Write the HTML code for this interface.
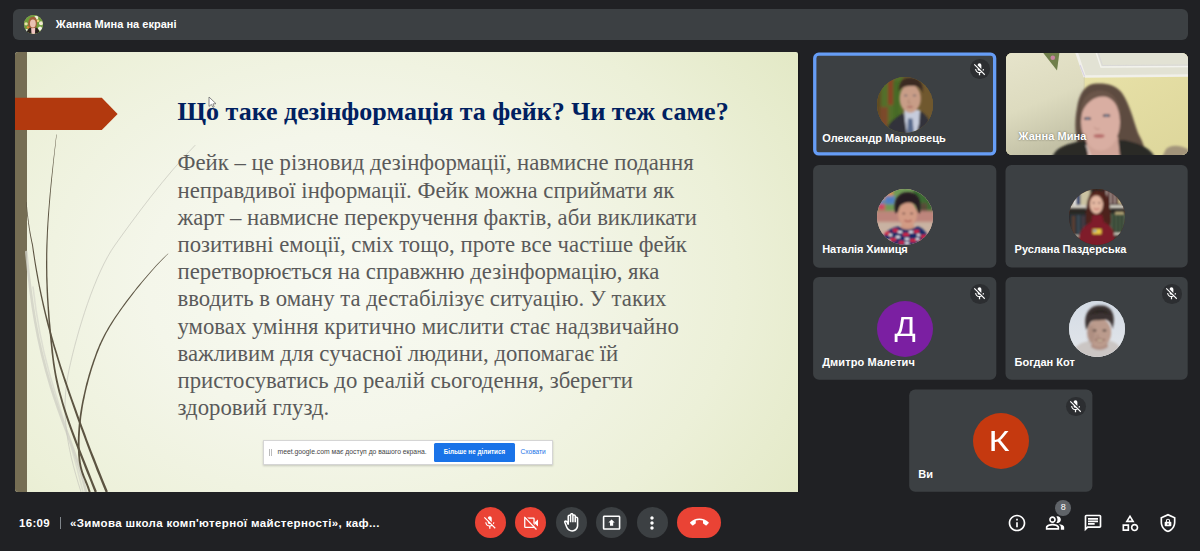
<!DOCTYPE html>
<html lang="uk">
<head>
<meta charset="utf-8">
<title>Meet</title>
<style>
*{box-sizing:border-box;margin:0;padding:0}
html,body{width:1200px;height:551px;overflow:hidden;background:#202124;font-family:"Liberation Sans",sans-serif;color:#fff}
.abs{position:absolute}
svg{display:block;position:absolute;overflow:visible}
#topbar{left:12.5px;top:9px;width:1175px;height:31px;background:#3c4043;border-radius:6px}
.ui{font-weight:bold;white-space:nowrap;line-height:14px;color:#fff}
#topbar .t{left:43.3px;top:8.2px;font-size:11px;letter-spacing:0.02px}
#slide{left:15px;top:52px;width:783px;height:439.500px;overflow:hidden;border-radius:3px 2px 0 3px;box-shadow:1.500px 0 0 #17181a;
 background:radial-gradient(ellipse 560px 420px at 42% 52%,#f8faf2 0%,#f4f6ea 35%,#ecf0d8 70%,#e2e8c4 100%)}
.tile{border-radius:6px;width:183px;height:103px;overflow:hidden}
.tile .nm{left:9.2px;top:77.4px;font-size:11px;letter-spacing:0}
.av{width:56px;height:56px;border-radius:50%;left:63.5px;top:23.5px;overflow:hidden}
.av svg{left:0;top:0}
.mic{width:19.5px;height:19.5px;border-radius:50%;background:#2c2e31;left:157px;top:7px}
.mic svg{left:2.25px;top:2.4px}
#title{left:162.5px;top:43.5px;font-family:"Liberation Serif",serif;font-weight:bold;font-size:26px;color:#002060;white-space:nowrap;line-height:32px}
#body{left:162.5px;top:97.3px;font-family:"Liberation Serif",serif;font-size:22.76px;color:#5a5a5a;white-space:nowrap;line-height:27.22px}
.btn{width:31.2px;height:31.2px;border-radius:50%;top:507.2px;background:#3c4043}
.red{background:#ea4335}
.letter{font-family:"Liberation Sans",sans-serif;color:#fff;text-align:center;width:56px;left:0}
</style>
</head>
<body>
<div id="topbar" class="abs">
  <div class="abs" id="tav" style="left:11.800px;top:5.800px;width:19.100px;height:19.100px;border-radius:50%;overflow:hidden;background:#b9a27e"><svg width="19.100" height="19.100" viewBox="0 0 56 56" style="left:0;top:0">
<rect width="56" height="56" fill="#6f9e3c"/>
<g filter="url(#b2)"><circle cx="36" cy="8" r="6" fill="#f3efd8"/><circle cx="50" cy="24" r="6" fill="#f1ead0"/><circle cx="6" cy="26" r="5" fill="#eadfa8"/><circle cx="47" cy="40" r="6" fill="#f3f1e6"/><circle cx="41" cy="17" r="4" fill="#e9d37a"/><circle cx="12" cy="36" r="4" fill="#e08a3a"/><circle cx="38" cy="52" r="5" fill="#f0d080"/><circle cx="8" cy="46" r="5" fill="#efeee8"/>
<path d="M6,58 C8,44 14,38 22,36 L34,36 C42,38 46,46 46,58Z" fill="#29221f"/><path d="M21,36 L33,36 L32,58 L22,58Z" fill="#f0c4c0"/>
<path d="M13,34 C10,14 18,5 27,5 C36,5 40,14 37,34 C34,40 16,40 13,34Z" fill="#a2613a"/><ellipse cx="26" cy="25" rx="8.500" ry="11.500" fill="#e9c2b2"/></g>
</svg></div>
  <div class="t ui abs">Жанна Мина на екрані</div>
</div>

<div id="slide" class="abs">
  <div class="abs" style="left:0;top:0;width:12px;height:440px;background:#756d53"></div>
  <svg id="deco" width="783" height="440" viewBox="0 0 783 440" style="left:0;top:0">
    <g fill="none" stroke-linecap="round">
      <path d="M11.3,200 C16,250 22,290 36,335 S62,400 71,440" stroke="#cfcfc4" stroke-width="2.6" opacity=".8"/>
      <path d="M18,235 C22,270 27,295 34,320 S55,385 68,440" stroke="#d6d6cc" stroke-width="1.6" opacity=".7"/>
      <path d="M180,93.4 C150,124 120,165 100,193 S62,280 54,318 S50,390 66,440" stroke="#c9c9be" stroke-width="0.9" opacity=".85"/>
    </g>
    <path fill="#5c5442" d="M41.3,82.5 L40.6,88.6 L39.9,94.6 L39.2,100.4 L38.5,106.2 L37.9,111.8 L37.3,117.3 L36.7,122.7 L36.1,127.9 L35.6,133.1 L35.1,138.2 L34.6,143.2 L34.2,148.1 L33.8,152.9 L33.4,157.7 L33.0,162.4 L32.7,167.0 L32.4,171.5 L32.1,176.1 L31.9,180.5 L31.7,184.9 L31.5,189.3 L31.3,193.7 L31.2,198.0 L31.1,202.3 L31.1,206.6 L31.0,210.8 L31.0,215.1 L31.1,219.4 L31.1,223.7 L31.2,228.0 L31.4,232.4 L31.5,236.7 L31.7,241.2 L31.9,245.7 L32.2,250.2 L32.5,254.8 L32.8,259.5 L33.1,264.2 L33.5,269.1 L33.9,274.0 L34.4,279.1 L34.9,284.2 L35.4,289.5 L36.0,294.9 L36.5,300.4 L37.2,306.1 L37.9,311.8 L38.8,317.6 L39.8,323.3 L40.9,329.0 L42.2,334.7 L43.6,340.4 L45.2,346.1 L46.8,351.8 L48.5,357.5 L50.4,363.2 L52.3,369.0 L54.3,374.7 L56.4,380.5 L58.5,386.3 L60.7,392.1 L63.0,398.0 L65.3,403.9 L67.7,409.9 L70.0,415.9 L72.4,421.9 L74.9,428.0 L77.3,434.2 L79.7,440.4 L81.9,439.6 L79.4,433.4 L76.9,427.2 L74.5,421.1 L72.1,415.1 L69.7,409.1 L67.3,403.1 L65.0,397.2 L62.7,391.4 L60.5,385.6 L58.3,379.8 L56.2,374.0 L54.2,368.3 L52.2,362.6 L50.4,356.9 L48.6,351.3 L47.0,345.6 L45.4,339.9 L44.0,334.3 L42.7,328.6 L41.5,323.0 L40.5,317.3 L39.6,311.6 L38.8,305.9 L38.2,300.2 L37.6,294.7 L37.0,289.3 L36.5,284.1 L35.9,278.9 L35.5,273.9 L35.0,269.0 L34.6,264.1 L34.3,259.4 L33.9,254.7 L33.6,250.1 L33.3,245.6 L33.1,241.1 L32.9,236.7 L32.7,232.3 L32.6,228.0 L32.4,223.7 L32.4,219.4 L32.3,215.1 L32.3,210.8 L32.3,206.6 L32.3,202.3 L32.4,198.0 L32.5,193.7 L32.6,189.4 L32.8,185.0 L32.9,180.6 L33.2,176.1 L33.4,171.6 L33.7,167.1 L34.0,162.4 L34.3,157.7 L34.7,153.0 L35.1,148.2 L35.5,143.3 L35.9,138.3 L36.4,133.2 L36.9,128.0 L37.4,122.7 L38.0,117.3 L38.5,111.8 L39.1,106.2 L39.7,100.5 L40.4,94.6 L41.0,88.7 L41.7,82.5Z"/>
    <path fill="#5c5442" d="M11.1,150.0 L11.2,152.6 L11.4,155.1 L11.7,157.5 L11.9,159.8 L12.1,162.0 L12.3,164.2 L12.6,166.3 L12.8,168.3 L13.1,170.3 L13.3,172.2 L13.6,174.0 L13.8,175.8 L14.1,177.6 L14.4,179.3 L14.6,180.9 L14.9,182.6 L15.2,184.1 L15.5,185.7 L15.8,187.2 L16.1,188.7 L16.4,190.2 L16.7,191.7 L17.0,193.1 L17.8,199.1 L18.7,205.1 L19.6,210.9 L20.5,216.6 L21.5,222.2 L22.5,227.7 L23.5,233.0 L24.5,238.3 L25.6,243.5 L26.7,248.6 L27.8,253.7 L28.9,258.6 L30.1,263.5 L31.3,268.4 L32.5,273.2 L33.8,277.9 L35.0,282.6 L36.3,287.3 L37.7,291.9 L39.0,296.5 L40.4,301.1 L41.8,305.7 L43.2,310.3 L44.6,314.9 L46.2,319.8 L47.9,324.9 L49.6,330.2 L51.4,335.6 L53.3,341.2 L55.3,346.8 L57.3,352.6 L59.4,358.5 L61.5,364.5 L63.7,370.5 L65.9,376.5 L68.1,382.6 L70.3,388.6 L72.6,394.7 L74.9,400.7 L77.2,406.7 L79.5,412.6 L81.7,418.4 L84.0,424.1 L86.3,429.7 L88.5,435.2 L90.7,440.5 L92.9,439.5 L90.7,434.2 L88.4,428.8 L86.2,423.2 L83.9,417.5 L81.6,411.7 L79.3,405.8 L76.9,399.9 L74.6,393.9 L72.3,387.9 L70.1,381.8 L67.8,375.8 L65.6,369.8 L63.4,363.8 L61.3,357.8 L59.2,352.0 L57.1,346.2 L55.1,340.5 L53.2,335.0 L51.4,329.6 L49.6,324.4 L47.9,319.3 L46.3,314.4 L44.8,309.7 L43.4,305.2 L42.0,300.6 L40.6,296.0 L39.2,291.4 L37.9,286.8 L36.6,282.2 L35.3,277.5 L34.0,272.8 L32.8,268.0 L31.5,263.2 L30.3,258.3 L29.2,253.4 L28.0,248.3 L26.9,243.2 L25.8,238.1 L24.7,232.8 L23.7,227.4 L22.7,222.0 L21.7,216.4 L20.7,210.7 L19.8,204.9 L18.9,199.0 L18.0,192.9 L17.7,191.5 L17.3,190.0 L17.0,188.5 L16.7,187.0 L16.4,185.5 L16.1,184.0 L15.8,182.4 L15.5,180.8 L15.2,179.1 L14.9,177.4 L14.6,175.7 L14.4,173.9 L14.1,172.1 L13.8,170.2 L13.6,168.2 L13.3,166.2 L13.1,164.1 L12.8,161.9 L12.5,159.7 L12.3,157.4 L12.1,155.0 L11.8,152.5 L11.5,150.0Z"/>
    <path fill="#5c5442" d="M153.1,201.5 L150.6,203.7 L148.2,206.1 L145.8,208.5 L143.3,211.1 L140.9,213.6 L138.5,216.3 L136.0,219.0 L133.6,221.7 L131.2,224.4 L128.8,227.2 L126.5,230.0 L124.1,232.8 L121.8,235.6 L119.6,238.4 L117.3,241.3 L115.2,244.1 L113.0,246.8 L110.9,249.6 L108.9,252.3 L107.0,255.0 L105.1,257.6 L103.3,260.2 L101.5,262.7 L99.9,265.1 L98.3,267.5 L96.8,269.8 L95.4,272.0 L94.0,274.2 L92.8,276.3 L91.6,278.4 L90.4,280.4 L89.3,282.4 L88.3,284.4 L87.3,286.4 L86.4,288.3 L85.5,290.2 L84.6,292.1 L83.8,294.0 L83.0,295.9 L82.2,297.8 L81.4,299.8 L80.7,301.7 L80.0,303.7 L79.3,305.7 L78.5,307.7 L77.8,309.8 L77.1,311.9 L76.3,314.3 L75.5,316.8 L74.7,319.5 L73.8,322.3 L73.0,325.3 L72.1,328.4 L71.2,331.6 L70.4,334.9 L69.6,338.4 L68.8,341.9 L68.0,345.5 L67.2,349.2 L66.5,353.0 L65.8,356.9 L65.2,360.8 L64.6,364.7 L64.1,368.7 L63.7,372.7 L63.4,376.8 L63.1,380.9 L62.9,384.9 L62.8,389.0 L62.8,392.9 L62.8,396.5 L63.0,399.8 L63.1,402.8 L63.4,405.7 L63.6,408.3 L64.0,410.7 L64.4,412.9 L64.8,415.0 L65.3,416.9 L65.8,418.8 L66.3,420.5 L66.9,422.2 L67.5,423.9 L68.1,425.5 L68.8,427.1 L69.5,428.8 L70.1,430.4 L70.9,432.2 L71.6,434.0 L72.3,436.0 L73.0,438.1 L73.7,440.3 L75.7,439.7 L74.9,437.4 L74.2,435.3 L73.4,433.3 L72.7,431.5 L72.0,429.7 L71.3,428.0 L70.6,426.4 L69.9,424.8 L69.3,423.2 L68.7,421.6 L68.1,419.9 L67.6,418.2 L67.1,416.4 L66.6,414.6 L66.2,412.5 L65.8,410.4 L65.5,408.0 L65.2,405.5 L65.0,402.7 L64.8,399.7 L64.7,396.4 L64.6,392.9 L64.6,389.0 L64.7,385.0 L64.9,381.0 L65.1,376.9 L65.4,372.9 L65.9,368.9 L66.3,364.9 L66.9,361.0 L67.5,357.1 L68.1,353.3 L68.8,349.6 L69.6,345.9 L70.3,342.2 L71.1,338.7 L71.9,335.3 L72.8,332.0 L73.6,328.8 L74.4,325.7 L75.3,322.7 L76.1,319.9 L76.9,317.3 L77.7,314.8 L78.5,312.4 L79.2,310.2 L79.9,308.2 L80.6,306.2 L81.3,304.2 L82.0,302.2 L82.8,300.3 L83.5,298.4 L84.3,296.5 L85.0,294.6 L85.9,292.7 L86.7,290.8 L87.6,288.9 L88.5,287.0 L89.5,285.0 L90.5,283.1 L91.5,281.1 L92.7,279.0 L93.9,277.0 L95.1,274.8 L96.4,272.7 L97.8,270.4 L99.3,268.1 L100.8,265.8 L102.5,263.3 L104.2,260.8 L106.0,258.2 L107.9,255.6 L109.8,252.9 L111.8,250.2 L113.9,247.5 L116.0,244.7 L118.1,241.9 L120.3,239.1 L122.6,236.2 L124.9,233.4 L127.2,230.6 L129.5,227.8 L131.9,225.0 L134.2,222.2 L136.6,219.5 L139.0,216.8 L141.4,214.1 L143.8,211.5 L146.2,209.0 L148.6,206.5 L151.0,204.1 L153.3,201.7Z"/>
    <polygon points="0,45.700 86.800,45.700 102.600,61.900 86.800,78.100 0,78.100" fill="#b2390e"/>
  </svg>
  <div id="title" class="abs">Що таке дезінформація та фейк? Чи теж саме?</div>
  <div id="body" class="abs">Фейк – це різновид дезінформації, навмисне подання<br>неправдивої інформації. Фейк можна сприймати як<br>жарт – навмисне перекручення фактів, аби викликати<br>позитивні емоції, сміх тощо, проте все частіше фейк<br>перетворюється на справжню дезінформацію, яка<br>вводить в оману та дестабілізує ситуацію. У таких<br>умовах уміння критично мислити стає надзвичайно<br>важливим для сучасної людини, допомагає їй<br>пристосуватись до реалій сьогодення, зберегти<br>здоровий глузд.</div>
  <svg width="10" height="14" viewBox="0 0 10 14" style="left:193.100px;top:44.100px"><path d="M1,1 L1,10.400 L3.400,8.400 L4.900,11.400 L6.200,10.800 L4.900,7.900 L8,7.700Z" fill="#fff" stroke="#6b6b6b" stroke-width="0.800" stroke-linejoin="round"/></svg>
  <div id="share" class="abs" style="left:247.500px;top:387.500px;width:290px;height:25.500px;background:#fff;border:1px solid #d5d5d5;box-shadow:0 1px 2px rgba(0,0,0,.18);font-size:6px;line-height:8px;color:#444;white-space:nowrap">
    <div class="abs" style="left:5.500px;top:8px;width:1px;height:7px;background:#bbb"></div><div class="abs" style="left:7.700px;top:8px;width:1px;height:7px;background:#bbb"></div>
    <div class="abs" style="left:14px;top:7.500px;font-size:6.800px">meet.google.com має доступ до вашого екрана.</div>
    <div class="abs" style="left:170.700px;top:2.900px;width:80.500px;height:18.200px;background:#1a73e8;border-radius:1.500px;color:#fff;font-weight:bold;font-size:6.300px;text-align:center;line-height:18px">Більше не ділитися</div>
    <div class="abs" style="left:257px;top:7.500px;color:#1a73e8;font-size:6.600px">Сховати</div>
  </div>
</div>

<svg width="1200" height="551" viewBox="0 0 1200 551" style="left:0;top:0">
<rect x="814.750" y="54.150" width="179.900" height="99.800" rx="4" fill="#3c4043" stroke="#669df6" stroke-width="3.300"/>
<g fill="#3c4043"><rect x="813.100" y="165.050" width="183.200" height="102.600" rx="6"/><rect x="1005.500" y="165.050" width="182.200" height="102.500" rx="6"/>
<rect x="813.100" y="277.100" width="183.200" height="102.700" rx="6"/><rect x="1005.500" y="277.100" width="182.200" height="102.700" rx="6"/>
<rect x="909.200" y="389.500" width="183.200" height="102.200" rx="6"/></g>
</svg>
<div class="tile abs" id="t1" style="left:813px;top:52px;height:104px;background:none;border-radius:0;overflow:visible"><div class="av abs" style="left:63.8px;top:24.7px;background:#6b5a3a"><svg width="56" height="56" viewBox="0 0 56 56">
<rect width="56" height="56" fill="#6a5830"/>
<g filter="url(#b2)"><rect x="-4" y="-4" width="30" height="64" fill="#52702b"/><rect x="-2" y="6" width="6" height="44" fill="#5e4a22"/><rect x="11" y="-2" width="5.500" height="30" fill="#8a4128"/><rect x="3" y="30" width="8" height="22" fill="#7b4a2a"/><rect x="16" y="4" width="7" height="40" fill="#476a26"/><rect x="43" y="4" width="16" height="38" fill="#70592f"/></g>
<g filter="url(#b1)"><path d="M8,58 C10,48 14,44 26,36 L34,46 L43,34 C50,38 54,44 56,58Z" fill="#31313a"/><path d="M27,33 L43,33 L42,47 L39,58 L30,58 L28,44Z" fill="#c6ccdc"/><path d="M31,41.500 L35.500,41.500 L37,58 L30,58Z" fill="#596a8c"/>
<ellipse cx="33.200" cy="21.500" rx="10.600" ry="14.200" fill="#c89d87"/><path d="M22,15 C21,3 28,0.500 34,0.800 C42,1 47,6 45.500,16 C44,11 41,8.500 34,9 C28,9 23.500,10.500 22,15Z" fill="#3a2b23"/>
<ellipse cx="28.800" cy="18.500" rx="1.700" ry="0.800" fill="#5a5a68"/><ellipse cx="37.500" cy="18.500" rx="1.700" ry="0.800" fill="#5a5a68"/><path d="M32,22 L31,26 L34,26.300" stroke="#a87c68" stroke-width="0.800" fill="none"/><ellipse cx="33" cy="29.800" rx="3.200" ry="0.900" fill="#a5645a"/></g>
</svg></div><div class="nm ui abs" style="left:9.2px;top:78.5px;letter-spacing:0.03px">Олександр Марковець</div><div class="mic abs" style="left:157px;top:7.2px"><svg width="15" height="15" viewBox="0 0 24 24"><path fill="#fff" d="M19 11h-1.700c0 .74-.16 1.430-.43 2.050l1.230 1.230c.56-.98.9-2.090.9-3.280zm-4.020.17c0-.06.02-.11.020-.17V5c0-1.660-1.340-3-3-3S9 3.340 9 5v.18l5.980 5.990zM4.270 3L3 4.270l6.010 6.010V11c0 1.660 1.330 3 2.990 3 .22 0 .44-.03.65-.08l1.660 1.660c-.71.33-1.500.52-2.310.52-2.760 0-5.300-2.100-5.300-5.100H5c0 3.410 2.720 6.230 6 6.720V21h2v-3.280c.91-.13 1.770-.45 2.540-.9L19.730 21 21 19.730 4.270 3z"/></svg></div></div>
<div class="tile abs" id="t2" style="left:1005.5px;top:52.5px;width:182.2px;height:102.8px;background:#d9d6a8"><svg width="183" height="103" viewBox="0 0 183 103" style="left:0;top:0">
<defs>
<linearGradient id="wl" x1="0" y1="0" x2="0.300" y2="1"><stop offset="0" stop-color="#e6e4cb"/><stop offset="0.550" stop-color="#dddbbf"/><stop offset="1" stop-color="#c3c1a6"/></linearGradient>
<linearGradient id="wr" x1="0" y1="0" x2="1" y2="1"><stop offset="0" stop-color="#ece6ad"/><stop offset="1" stop-color="#ddd69b"/></linearGradient>
</defs>
<rect width="183" height="103" fill="url(#wr)"/>
<rect width="78" height="103" fill="url(#wl)"/>
<g filter="url(#b05)">
<path d="M70.400,-1 L184,-1 L184,22.500 L78.600,23.500Z" fill="#e2e2d4"/>
<path d="M70.400,-1 L78.600,23.500 L184,22.500" stroke="#f1f0ea" stroke-width="2.600" fill="none"/>
<path d="M74,12 L78.600,23.500" stroke="#d9d3e2" stroke-width="1.200" fill="none"/>
<path d="M90,-1 L95,14 L184,13.500" stroke="#f3f3ee" stroke-width="1.300" fill="none"/>
<path d="M92,-1 L96.500,12.500 L184,12" stroke="#d6d4d8" stroke-width="0.700" fill="none"/>
<path d="M78.200,24 L78,60" stroke="#d3d0ae" stroke-width="1" fill="none"/>
<path d="M36.500,-1 L53.500,-1 L51,17.500Z" fill="#6f7f4c"/><circle cx="46.800" cy="4.700" r="2.300" fill="#c884a0"/>
</g>
<g filter="url(#b1)">
<path d="M156,104 L160,96 C166,91 174,92 184,97 L184,104Z" fill="#a2947a"/>
<path d="M91,30.500 C80,30 73,40 71,55 C68,70 69,85 74,98 L76,104 L140,104 C139,93 136,88 132,80 C127,66 124,52 116,40 C110,32 100,30 91,30.500Z" fill="#5d4b40"/>
<path d="M46,104 C50,95 58,92 70,89 L80,87 L118,87 C130,90 142,92 149,104Z" fill="#2b2926"/>
<path d="M80,84 L112,84 L114,104 L82,104Z" fill="#cfa498"/>
<ellipse cx="94.500" cy="69" rx="19.500" ry="28.500" fill="#d9aea2"/>
<path d="M75,62 C74,46 82,37 95,37.500 C106,38 113,46 115.500,62 C112,52 106,44 98,43.500 C88,43 79,50 75,62Z" fill="#6a5548"/>
<ellipse cx="81.500" cy="65.500" rx="3.600" ry="1.600" fill="#54505c"/><ellipse cx="100.500" cy="62.500" rx="3.800" ry="1.600" fill="#54505c"/>
<ellipse cx="81.500" cy="65.700" rx="1.200" ry="0.900" fill="#8aa0b8"/><ellipse cx="100.500" cy="62.700" rx="1.200" ry="0.900" fill="#8aa0b8"/>
<path d="M88,74 Q90,77.500 93.500,76" stroke="#b98a80" stroke-width="1" fill="none"/>
<ellipse cx="93" cy="83" rx="5.500" ry="1.900" fill="#b86e6c"/>
<path d="M80,92 C82,97 83,100 85,104" stroke="#e8e6e4" stroke-width="0.900" fill="none"/>
</g>
</svg><div class="nm ui abs" style="left:13px;top:76.9px;letter-spacing:0.05px;text-shadow:0 0 2px rgba(0,0,0,.55)">Жанна Мина</div></div>
<div class="tile abs" id="t3" style="left:813px;top:165px"><div class="av abs" style="background:#8a6a6a"><svg width="56" height="56" viewBox="0 0 56 56">
<rect width="56" height="56" fill="#c9ad9e"/>
<g filter="url(#b2)"><rect x="-4" y="-6" width="64" height="28" fill="#6f9a55"/><rect x="36" y="-4" width="26" height="28" fill="#3a6a30"/><rect x="43.500" y="14" width="6.500" height="19" fill="#5a4838"/><rect x="4" y="2" width="12" height="9" fill="#d89048"/><rect x="8" y="7" width="10" height="8" fill="#4f7fc2"/><rect x="-2" y="10" width="9" height="7" fill="#5c86c0"/><rect x="1" y="15" width="7" height="6" fill="#d04462"/><rect x="-4" y="22" width="64" height="11" fill="#bd857b"/><rect x="-4" y="33" width="64" height="9" fill="#c9b2a2"/></g>
<g filter="url(#b1)"><path d="M3,58 C4,46 10,40 21,37.500 C27,40 35,40 41,37.500 C48,40 52,46 53,58Z" fill="#1f2a68"/>
<g fill="#d02840"><rect x="8" y="43" width="5" height="3"/><rect x="16" y="40" width="5" height="3"/><rect x="26" y="44" width="6" height="3"/><rect x="37" y="41" width="5" height="3"/><rect x="44" y="46" width="5" height="3"/><rect x="13" y="49" width="6" height="3"/><rect x="33" y="50" width="6" height="3"/><rect x="22" y="52" width="5" height="3"/><rect x="42" y="51" width="4" height="3"/></g>
<g fill="#ebe8f0"><rect x="12" y="45" width="3" height="2"/><rect x="21" y="42" width="4" height="2"/><rect x="32" y="42" width="4" height="2"/><rect x="40" y="45" width="3" height="2"/><rect x="19" y="47" width="4" height="2"/><rect x="28" y="49" width="4" height="2"/><rect x="39" y="49" width="3" height="2"/><rect x="9" y="51" width="4" height="2"/><rect x="28" y="53" width="4" height="2"/></g>
<path d="M25.500,33 L35.500,33 L37.500,38.500 C33,41.500 28,41.500 23.500,38.500Z" fill="#cf9882"/>
<ellipse cx="30.600" cy="25.200" rx="9.600" ry="12.200" fill="#d39b85"/>
<path d="M18.200,23 C15.500,8 24,2.800 31,3.200 C39.500,3.200 45.500,9 42.800,23.500 C41,27 40.800,21 39,16.500 C34,12 28,13 23,17 C21.500,20 20.800,27 18.200,23Z" fill="#261a22"/>
<ellipse cx="26.800" cy="24.500" rx="1.500" ry="0.700" fill="#4a3030"/><ellipse cx="34.600" cy="24.500" rx="1.500" ry="0.700" fill="#4a3030"/><path d="M27.500,31.300 Q31,33.800 34.500,31.300" stroke="#a8504c" stroke-width="1.100" fill="none"/></g>
</svg></div><div class="nm ui abs" style="letter-spacing:-0.13px">Наталія Химиця</div></div>
<div class="tile abs" id="t4" style="left:1005px;top:165px"><div class="av abs" style="background:#7a3a2a"><svg width="56" height="56" viewBox="0 0 56 56">
<rect width="56" height="56" fill="#2a2723"/>
<g filter="url(#b1)"><rect x="0" y="0" width="22" height="16" fill="#8f8a72"/><rect x="4" y="9" width="3.500" height="7.500" fill="#e2e2e0"/><rect x="7.500" y="4" width="4" height="12" fill="#3a4a72"/><rect x="11.500" y="1" width="9" height="15" fill="#cbc3a2"/>
<rect x="34" y="0" width="24" height="15.500" fill="#4a2028"/><rect x="37" y="1" width="1.600" height="14" fill="#b8a8a0"/><rect x="41" y="1" width="1.600" height="14" fill="#b8a8a0"/><rect x="45" y="2" width="1.600" height="13" fill="#b8a8a0"/><rect x="49" y="3" width="7" height="12" fill="#c9b88c"/>
<rect x="-2" y="16" width="60" height="3.400" fill="#d2cec2"/>
<rect x="0" y="25" width="19" height="22" fill="#2b3038"/><rect x="3" y="27" width="3" height="19" fill="#5a4030"/><rect x="8" y="26" width="3" height="20" fill="#3a4a52"/><rect x="13" y="27" width="2.500" height="19" fill="#4a3a44"/>
<rect x="41" y="24.500" width="17" height="19.500" fill="#4b5c49"/><rect x="44.500" y="25" width="1.300" height="19" fill="#26341f"/><rect x="48.500" y="25" width="1.300" height="19" fill="#26341f"/><rect x="52" y="25" width="1.300" height="19" fill="#26341f"/><rect x="46" y="22.500" width="9" height="3" fill="#b8a878"/>
<rect x="38" y="43.800" width="20" height="2.600" fill="#cfcbbf"/><rect x="0" y="46" width="14" height="2.500" fill="#b9b5a9"/>
<path d="M16.800,34 C16.500,12 19.500,1.200 28.500,1.200 C39.500,1.200 41.500,12 42,34 C39,38 20,38 16.800,34Z" fill="#4e241a"/>
<path d="M8,58 C9,45 13,37 22,33.500 L23.500,26 L33,26 L35,33.500 C44,36 46.500,45 46.500,58Z" fill="#7f1a29"/>
<ellipse cx="27.400" cy="15" rx="6.700" ry="10" fill="#e3b7a1"/>
<path d="M20.300,13 C21,5.500 25,3.300 28.500,3.600 C32.500,4 34.800,8 34.500,15 C33,9 30,6 27,6.500 C23.500,7 21.500,10 20.300,13Z" fill="#56281c"/>
<ellipse cx="24.700" cy="13.800" rx="1.200" ry="0.650" fill="#4a3030"/><ellipse cx="30.300" cy="13.800" rx="1.200" ry="0.650" fill="#4a3030"/><path d="M24.800,19.500 Q27.500,21.800 30.300,19.500" stroke="#b0504c" stroke-width="1" fill="none"/>
<rect x="23.500" y="40" width="9" height="5.200" rx="0.600" fill="#e8c840"/><rect x="24.300" y="41" width="3" height="1.800" fill="#4a8ac8"/></g>
</svg></div><div class="nm ui abs" style="left:9.6px;letter-spacing:-0.03px">Руслана Паздерська</div></div>
<div class="tile abs" id="t5" style="left:813px;top:277px"><div class="av abs" style="background:#7b1fa2"><div class="letter abs" style="font-size:27.5px;line-height:56px;top:-1.6px;transform:scaleX(1.14)">Д</div></div><div class="nm ui abs" style="top:78px;letter-spacing:0.1px">Дмитро Малетич</div><div class="mic abs"><svg width="15" height="15" viewBox="0 0 24 24"><path fill="#fff" d="M19 11h-1.700c0 .74-.16 1.430-.43 2.050l1.230 1.230c.56-.98.9-2.090.9-3.280zm-4.020.17c0-.06.02-.11.020-.17V5c0-1.660-1.340-3-3-3S9 3.340 9 5v.18l5.980 5.990zM4.270 3L3 4.270l6.010 6.010V11c0 1.660 1.330 3 2.990 3 .22 0 .44-.03.65-.08l1.660 1.660c-.71.33-1.500.52-2.310.52-2.760 0-5.300-2.100-5.300-5.100H5c0 3.410 2.720 6.230 6 6.720V21h2v-3.280c.91-.13 1.770-.45 2.540-.9L19.730 21 21 19.730 4.270 3z"/></svg></div></div>
<div class="tile abs" id="t6" style="left:1005px;top:277px"><div class="av abs" style="background:#cfd6dc"><svg width="56" height="56" viewBox="0 0 56 56">
<defs><linearGradient id="g6" x1="0" y1="0" x2="0" y2="1"><stop offset="0" stop-color="#d3dbe5"/><stop offset="1" stop-color="#e3e6ea"/></linearGradient></defs>
<rect width="56" height="56" fill="url(#g6)"/>
<g filter="url(#b1)"><path d="M1,58 C3,47 9,42 20,40 L42,40 C50,42 53,48 55,58Z" fill="#cbc6c4"/>
<path d="M23,40 L38,40 L39,46 C34,50 27,50 22,46Z" fill="#b09084"/>
<ellipse cx="30.300" cy="31.500" rx="11.800" ry="14.500" fill="#bb9b8d"/>
<path d="M17.500,29 C13,12 22,4 31,4.500 C41,4 48,12 43.500,28 C42.500,23 41,20 37,18.500 C31,20 25,18 21.500,21 C19.500,24 19,27 17.500,29Z" fill="#3a3230"/>
<path d="M20,14 C24,8 36,6 42,14 C38,11 26,11 20,14Z" fill="#2c2624"/>
<ellipse cx="25.500" cy="29.500" rx="2" ry="0.900" fill="#4a3a38"/><ellipse cx="35.500" cy="29.500" rx="2" ry="0.900" fill="#4a3a38"/>
<path d="M29,33 L28,36.500 L31.500,36.800" stroke="#9c7c70" stroke-width="0.800" fill="none"/>
<path d="M26,38.500 Q31,43 36,38.500Z" fill="#e6d8b8" stroke="#7a4c48" stroke-width="0.700"/></g>
<ellipse cx="22" cy="33" rx="4" ry="9" fill="#8a6c62" opacity=".25" filter="url(#b2)"/>
</svg></div><div class="nm ui abs" style="left:9.6px;top:78px;letter-spacing:0.02px">Богдан Кот</div><div class="mic abs"><svg width="15" height="15" viewBox="0 0 24 24"><path fill="#fff" d="M19 11h-1.700c0 .74-.16 1.430-.43 2.050l1.230 1.230c.56-.98.9-2.090.9-3.280zm-4.020.17c0-.06.02-.11.020-.17V5c0-1.660-1.340-3-3-3S9 3.340 9 5v.18l5.980 5.990zM4.270 3L3 4.270l6.010 6.010V11c0 1.660 1.330 3 2.990 3 .22 0 .44-.03.65-.08l1.660 1.660c-.71.33-1.500.52-2.310.52-2.760 0-5.300-2.100-5.300-5.100H5c0 3.410 2.720 6.230 6 6.720V21h2v-3.280c.91-.13 1.770-.45 2.540-.9L19.730 21 21 19.730 4.270 3z"/></svg></div></div>
<div class="tile abs" id="t7" style="left:909px;top:389.5px"><div class="av abs" style="background:#c5390f"><div class="letter abs" style="font-size:30px;line-height:56px;top:0.2px;left:-1.5px;transform:scaleX(1.2)">К</div></div><div class="nm ui abs" style="left:9.3px">Ви</div><div class="mic abs"><svg width="15" height="15" viewBox="0 0 24 24"><path fill="#fff" d="M19 11h-1.700c0 .74-.16 1.430-.43 2.050l1.230 1.230c.56-.98.9-2.090.9-3.280zm-4.020.17c0-.06.02-.11.020-.17V5c0-1.660-1.340-3-3-3S9 3.340 9 5v.18l5.980 5.990zM4.270 3L3 4.270l6.010 6.010V11c0 1.660 1.330 3 2.990 3 .22 0 .44-.03.65-.08l1.660 1.660c-.71.33-1.500.52-2.310.52-2.760 0-5.300-2.100-5.300-5.100H5c0 3.410 2.720 6.230 6 6.720V21h2v-3.280c.91-.13 1.770-.45 2.540-.9L19.730 21 21 19.730 4.270 3z"/></svg></div></div>

<div class="ui abs" style="left:19px;top:516px;font-size:11.500px;letter-spacing:0.3px">16:09</div>
<div class="abs" style="left:60px;top:516.5px;width:1px;height:12px;background:#80868b"></div>
<div class="ui abs" style="left:70px;top:516px;font-size:11.500px;letter-spacing:0.37px">«Зимова школа комп'ютерної майстерності», каф...</div>

<svg width="0" height="0" style="left:0;top:0"><defs>
<filter id="b1" x="-20%" y="-20%" width="140%" height="140%"><feGaussianBlur stdDeviation="0.9"/></filter>
<filter id="b2" x="-20%" y="-20%" width="140%" height="140%"><feGaussianBlur stdDeviation="1.8"/></filter>
<filter id="b3" x="-20%" y="-20%" width="140%" height="140%"><feGaussianBlur stdDeviation="3.5"/></filter>
<filter id="b05" x="-20%" y="-20%" width="140%" height="140%"><feGaussianBlur stdDeviation="0.5"/></filter>
</defs></svg>

<div class="btn red abs" style="left:474.7px"><svg width="15.6" height="15.6" viewBox="0 0 24 24" style="left:7.8px;top:7.9px"><path fill="#fff" d="M19 11h-1.700c0 .74-.16 1.430-.43 2.050l1.230 1.230c.56-.98.9-2.090.9-3.280zm-4.020.17c0-.06.02-.11.020-.17V5c0-1.660-1.340-3-3-3S9 3.340 9 5v.18l5.980 5.990zM4.270 3L3 4.270l6.010 6.010V11c0 1.660 1.330 3 2.990 3 .22 0 .44-.03.65-.08l1.660 1.660c-.71.33-1.500.52-2.310.52-2.760 0-5.300-2.100-5.300-5.100H5c0 3.410 2.720 6.230 6 6.720V21h2v-3.280c.91-.13 1.770-.45 2.540-.9L19.730 21 21 19.730 4.270 3z"/></svg></div>
<div class="btn red abs" style="left:515px"><svg width="31.2" height="31.2" viewBox="-15.600 -15.600 31.200 31.200" style="left:0;top:0"><g fill="none" stroke="#fff"><rect x="-5.850" y="-4.500" width="9.300" height="9.300" rx="0.600" stroke-width="1.300"/><path d="M4.100,-0.400 L7.400,-3.200 L7.400,3.800 L4.100,1Z" fill="#fff" stroke="none"/><path d="M-5.300,-6.300 L6.900,6.300" stroke="#ea4335" stroke-width="1.300"/><path d="M-6.300,-5.700 L5.900,6.900" stroke-width="1.250"/></g></svg></div>
<div class="btn abs" style="left:555.7px"><svg width="18.700" height="18.700" viewBox="0 0 24 24" style="left:6.600px;top:6.250px"><path fill="#fff" d="M21 7c0-1.380-1.120-2.500-2.500-2.500-.17 0-.34.02-.5.050V4c0-1.380-1.120-2.500-2.500-2.500-.23 0-.46.03-.67.090C14.460.66 13.560 0 12.500 0c-1.230 0-2.250.89-2.460 2.060C9.870 2.020 9.690 2 9.500 2 8.120 2 7 3.120 7 4.500v5.890c-.34-.31-.76-.54-1.220-.66L5.010 9.520c-.83-.23-1.700.09-2.190.83-.38.57-.4 1.310-.15 1.950l2.560 6.430C6.490 21.910 9.570 24 13 24c4.420 0 8-3.580 8-8V7zm-2 9c0 3.310-2.690 6-6 6-2.610 0-4.950-1.590-5.910-4.010l-2.600-6.540.53.140c.46.12.83.46 1 .9L7 15h2V4.500c0-.28.22-.5.5-.5s.5.22.5.5V12h2V2.500c0-.28.22-.5.5-.5s.5.220.5.5V12h2V4c0-.28.22-.5.5-.5s.5.220.5.5v8h2V7c0-.28.22-.5.5-.5s.5.220.5.5v9z"/></svg></div>
<div class="btn abs" style="left:596.3px"><svg width="19.200" height="19.200" viewBox="0 0 24 24" style="left:5.900px;top:6.050px"><path fill="#fff" d="M21 3H3c-1.110 0-2 .89-2 2v14c0 1.110.89 2 2 2h18c1.110 0 2-.89 2-2V5c0-1.110-.89-2-2-2zm0 16.020H3V4.980h18v14.040zM10 12H8l4-4 4 4h-2v4h-4v-4z"/></svg></div>
<div class="btn abs" style="left:636.9px"><svg width="20" height="20" viewBox="0 0 24 24" style="left:5.600px;top:5.700px"><path fill="#fff" d="M12 8c1.100 0 2-.9 2-2s-.9-2-2-2-2 .9-2 2 .9 2 2 2zm0 2c-1.100 0-2 .9-2 2s.9 2 2 2 2-.9 2-2-.9-2-2-2zm0 6c-1.100 0-2 .9-2 2s.9 2 2 2 2-.9 2-2-.9-2-2-2z"/></svg></div>
<div class="btn red abs" style="left:677.4px;width:43.9px;border-radius:16px"><svg width="18.800" height="18.800" viewBox="0 0 24 24" style="left:12.700px;top:5.800px"><path fill="#fff" d="M12 9c-1.600 0-3.150.25-4.600.72v3.100c0 .39-.23.740-.56.9-.98.49-1.870 1.120-2.660 1.850-.18.180-.43.280-.7.280-.28 0-.53-.11-.71-.29L.29 13.080c-.18-.17-.29-.42-.29-.7 0-.28.110-.53.290-.71C3.340 8.780 7.460 7 12 7s8.660 1.780 11.710 4.670c.18.180.29.430.29.710 0 .28-.11.530-.29.710l-2.480 2.480c-.18.180-.43.290-.71.290-.27 0-.52-.11-.7-.28-.79-.74-1.690-1.360-2.670-1.850-.33-.16-.56-.5-.56-.9v-3.100C15.150 9.250 13.600 9 12 9z"/></svg></div>

<svg width="20" height="20" viewBox="0 0 24 24" style="left:1007.4px;top:512.9px"><path fill="#fff" d="M11 7h2v2h-2zm0 4h2v6h-2zm1-9C6.480 2 2 6.480 2 12s4.480 10 10 10 10-4.480 10-10S17.520 2 12 2zm0 18c-4.410 0-8-3.590-8-8s3.590-8 8-8 8 3.590 8 8-3.590 8-8 8z"/></svg>
<svg width="20" height="20" viewBox="0 0 24 24" style="left:1045px;top:513px"><path fill="#fff" d="M16.670 13.130C18.040 14.060 19 15.320 19 17v3h4v-3c0-2.180-3.570-3.470-6.330-3.870zM15 12c2.210 0 4-1.790 4-4s-1.790-4-4-4c-.47 0-.91.100-1.330.24C14.500 5.270 15 6.580 15 8s-.5 2.730-1.330 3.760c.42.140.86.240 1.330.24zM9 12c2.210 0 4-1.790 4-4s-1.790-4-4-4-4 1.790-4 4 1.790 4 4 4zm0-6c1.100 0 2 .9 2 2s-.9 2-2 2-2-.9-2-2 .9-2 2-2zM9 13c-2.670 0-8 1.340-8 4v3h16v-3c0-2.660-5.330-4-8-4zm6 5H3v-.99C3.200 16.290 6.300 15 9 15s5.800 1.290 6 2v1z"/></svg>
<div class="abs" style="left:1055.3px;top:500.2px;width:15.8px;height:15.8px;border-radius:50%;background:#5f6368;font-size:9px;line-height:15.8px;text-align:center;color:#fff">8</div>
<svg width="20" height="20" viewBox="0 0 24 24" style="left:1082.6px;top:512.9px"><path fill="#fff" d="M4 4h16v12H5.170L4 17.170V4m0-2c-1.100 0-1.990.9-1.990 2L2 22l4-4h14c1.100 0 2-.9 2-2V4c0-1.100-.9-2-2-2H4zm2 10h8v2H6v-2zm0-3h12v2H6V9zm0-3h12v2H6V6z"/></svg>
<svg width="20" height="20" viewBox="0 0 24 24" style="left:1120.3px;top:513px"><path fill="#fff" d="M12 2l-5.500 9h11L12 2zm0 3.840L13.930 9h-3.870L12 5.840zM17.500 13c-2.490 0-4.500 2.010-4.500 4.500s2.010 4.500 4.500 4.500 4.500-2.010 4.500-4.500-2.010-4.500-4.500-4.500zm0 7c-1.380 0-2.500-1.120-2.500-2.500s1.120-2.500 2.500-2.500 2.500 1.120 2.500 2.500-1.120 2.500-2.500 2.500zM3 21.500h8v-8H3v8zm2-6h4v4H5v-4z"/></svg>
<svg width="20" height="20" viewBox="0 0 24 24" style="left:1157.8px;top:512.8px"><path fill="#fff" d="M12 1L3 5v6c0 5.550 3.840 10.740 9 12 5.160-1.260 9-6.450 9-12V5l-9-4zm0 2.180l7 3.120v4.700c0 4.520-2.980 8.690-7 9.930-4.020-1.240-7-5.410-7-9.930V6.300l7-3.120z"/><path fill="#fff" d="M15 10.500h-.5V9.400c0-1.380-1.120-2.500-2.500-2.500S9.500 8.020 9.500 9.400v1.100H9c-.55 0-1 .45-1 1V15c0 .55.450 1 1 1h6c.55 0 1-.45 1-1v-3.500c0-.55-.45-1-1-1zm-3 3.750c-.55 0-1-.45-1-1s.45-1 1-1 1 .45 1 1-.45 1-1 1zm1.300-3.750h-2.600V9.400c0-.72.580-1.300 1.300-1.300s1.300.58 1.300 1.300v1.100z"/></svg>
</body>
</html>
